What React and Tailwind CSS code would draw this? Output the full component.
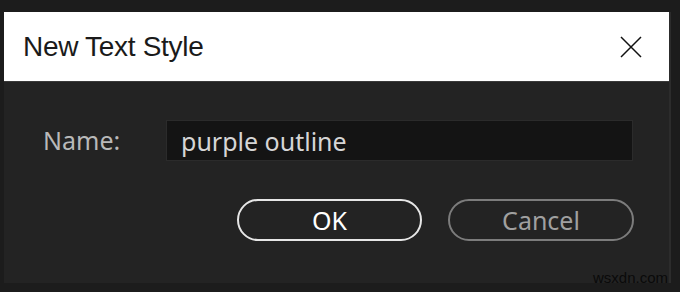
import React, { useState } from "react";

const App = () => {
  const [name, setName] = useState("purple outline");

  return (
    <div className="relative w-[680px] h-[292px] bg-[#1c1c1c] overflow-hidden pt-[12px] pl-[4px]">
      {/* Dialog */}
      <div className="w-[667px] border-r-2 border-[#2c2c2c]">
        {/* Title bar */}
        <div className="h-[70px] bg-white flex items-center justify-between pl-[19px] pr-[26px] border-b border-[#3a3a3a]">
          <span className="text-[28px] text-[#1a1a1a] font-['Liberation_Sans',sans-serif] tracking-[-0.3px]">
            New Text Style
          </span>
          <svg width="24" height="24" viewBox="0 0 24 24" className="text-[#111]">
            <path d="M2 2 L22 22 M22 2 L2 22" stroke="currentColor" strokeWidth="1.5" fill="none" />
          </svg>
        </div>

        {/* Body */}
        <div className="h-[201px] bg-[#232323] pl-[39px] pr-[35px] pt-[38px] font-['Noto_Sans',sans-serif]">
          <div className="flex items-center">
            <label className="w-[123px] text-[25px] text-[#b9b9b9] leading-none">Name:</label>
            <input
              value={name}
              onChange={(e) => setName(e.target.value)}
              className="w-[467px] h-[41px] bg-[#141414] border border-[#2b2b2b] px-[14px] text-[25px] text-[#d6d6d6] outline-none font-['Noto_Sans',sans-serif]"
            />
          </div>
          <div className="flex justify-end gap-[26px] mt-[38px]">
            <button className="w-[185px] h-[42px] rounded-full border-2 border-[#e6e6e6] text-[25px] text-white leading-none">
              OK
            </button>
            <button className="w-[186px] h-[42px] rounded-full border-2 border-[#7c7c7c] text-[25px] text-[#a0a0a0] leading-none">
              Cancel
            </button>
          </div>
        </div>
      </div>

      {/* watermark */}
      <span className="absolute right-[12px] bottom-[3px] text-[15px] text-[#0a0a0a] font-['Liberation_Sans',sans-serif]">
        wsxdn.com
      </span>
    </div>
  );
};

export default App;
